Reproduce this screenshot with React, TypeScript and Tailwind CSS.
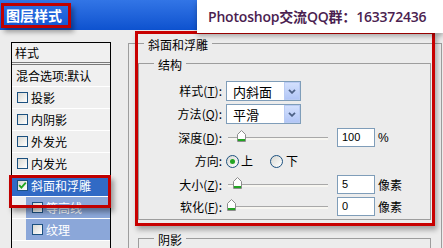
import React from 'react'

const CJK = "font-['Noto_Sans_CJK_SC',sans-serif]"

function Box({ checked }: { checked?: boolean }) {
  return (
    <span className="w-[11px] h-[11px] shrink-0 border border-[#1C5180] bg-linear-to-br from-[#D8D8D2] to-white flex items-center justify-center">
      {checked && (
        <svg width="9" height="9" viewBox="0 0 9 9">
          <path d="M1.2 4.2 L3.4 6.6 L7.8 1.6" stroke="#1FA51F" strokeWidth="1.8" fill="none" />
        </svg>
      )}
    </span>
  )
}

function ListRow({ label, selected, sub, checked }: { label: string; selected?: boolean; sub?: boolean; checked?: boolean }) {
  if (sub) {
    return (
      <div className="h-[22px] border-b border-white pl-[14px]">
        <div className="h-full bg-[#8BA7D9] flex items-center pl-[6px] gap-[3px] text-white">
          <Box />
          <span>{label}</span>
        </div>
      </div>
    )
  }
  return (
    <div className={'h-[22px] border-b border-white flex items-center pl-[5px] gap-[3px] ' + (selected ? 'bg-[#316AC5] text-white' : '')}>
      <Box checked={checked} />
      <span>{label}</span>
    </div>
  )
}

function Combo({ value }: { value: string }) {
  return (
    <div className="w-[75px] h-[20px] border border-[#7F9DB9] bg-white flex items-center">
      <span className="flex-1 pl-[6px] text-[13px] leading-none">{value}</span>
      <span className="w-[16px] h-[18px] border border-[#B9CBF3] bg-linear-to-b from-[#D3E0FD] to-[#B2C6F6] flex items-center justify-center">
        <svg width="8" height="5" viewBox="0 0 8 5">
          <path d="M1 0.8 L4 3.8 L7 0.8" stroke="#4D6185" strokeWidth="1.8" fill="none" />
        </svg>
      </span>
    </div>
  )
}

function Slider({ pos }: { pos: number }) {
  return (
    <div className="relative w-[104px] h-[19px]">
      <div className="absolute left-[2px] right-[2px] top-[9px] h-[3px] bg-[#F7F6F1] border-t border-[#A8A8A8]" />
      <svg className="absolute top-[2px]" style={{ left: pos }} width="9" height="12" viewBox="0 0 9 12">
        <path d="M0.5 11.5 V4.5 L4.5 0.5 L8.5 4.5 V11.5 Z" fill="#fff" stroke="#8C8C8C" />
        <rect x="1" y="9" width="7" height="2" fill="#22A422" />
      </svg>
    </div>
  )
}

function Num({ value }: { value: string }) {
  return (
    <div className="ml-[7px] w-[38px] h-[19px] border border-[#7F9DB9] bg-white flex items-center pl-[4px] font-['Liberation_Sans',sans-serif] text-[11px]">
      {value}
    </div>
  )
}

function Radio({ checked }: { checked?: boolean }) {
  return (
    <span className="w-[13px] h-[13px] rounded-full border border-[#1C5180] bg-linear-to-br from-[#D8D8D2] to-white flex items-center justify-center">
      {checked && <span className="w-[5px] h-[5px] rounded-full bg-[#22A422]" />}
    </span>
  )
}

function Field({ label, k, children, className = '' }: { label: string; k?: string; children: React.ReactNode; className?: string }) {
  return (
    <div className={'flex items-center ' + className}>
      <span className="w-[83px] shrink-0 text-right">
        {label}
        {k && (
          <>
            (<span className="underline">{k}</span>)
          </>
        )}
        :
      </span>
      <div className="ml-[4px] flex items-center">{children}</div>
    </div>
  )
}

const legend = 'ml-[15px] px-[4px] pt-[4px] leading-[14px]'

export default function App() {
  return (
    <div className={'relative w-[443px] h-[248px] overflow-hidden bg-[#ECECEC] text-[12px] text-black ' + CJK}>
      {/* title bar */}
      <div className="h-[30px] bg-linear-to-b from-[#3275E6] to-[#0D52CF] flex items-center pl-[6px]">
        <span className="text-white font-bold text-[14px] leading-none">图层样式</span>
      </div>

      <div className="flex">
        {/* effects list */}
        <div className="pl-[11px] pt-[12px]">
          <div className="w-[100px] h-[220px] border border-black bg-[#F0F0F0]">
            <div className="h-[22px] flex items-center pl-[3px] border-b-[3px] border-double border-[#7A7A7A]">样式</div>
            <div className="h-[22px] border-b border-white flex items-center pl-[4px]">混合选项:默认</div>
            <ListRow label="投影" />
            <ListRow label="内阴影" />
            <ListRow label="外发光" />
            <ListRow label="内发光" />
            <ListRow label="斜面和浮雕" selected checked />
            <ListRow label="等高线" sub />
            <ListRow label="纹理" sub />
          </div>
        </div>

        {/* options */}
        <fieldset className="ml-[17px] mt-[4px] w-[314px] h-[260px] border border-[#9D9D9D]">
          <legend className={legend + ' ml-[15px]'}>斜面和浮雕</legend>
          <fieldset className="ml-[9px] mt-[2px] w-[293px] border border-[#9D9D9D] pb-[3px]">
            <legend className={legend + ' ml-[14px]'}>结构</legend>
            <Field label="样式" k="T" className="mt-[9px] h-[20px]">
              <Combo value="内斜面" />
            </Field>
            <Field label="方法" k="Q" className="mt-[3px] h-[20px]">
              <Combo value="平滑" />
            </Field>
            <Field label="深度" k="D" className="mt-[4px] h-[19px]">
              <Slider pos={11} />
              <Num value="100" />
              <span className="ml-[3px] font-['Liberation_Sans',sans-serif] text-[12px]">%</span>
            </Field>
            <Field label="方向" className="mt-[4px] h-[20px]">
              <Radio checked />
              <span className="ml-[2px]">上</span>
              <span className="ml-[17px]">
                <Radio />
              </span>
              <span className="ml-[3px]">下</span>
            </Field>
            <Field label="大小" k="Z" className="mt-[4px] h-[19px]">
              <Slider pos={7} />
              <Num value="5" />
              <span className="ml-[3px]">像素</span>
            </Field>
            <Field label="软化" k="F" className="mt-[3px] h-[19px]">
              <Slider pos={1} />
              <Num value="0" />
              <span className="ml-[3px]">像素</span>
            </Field>
          </fieldset>
          <fieldset className="ml-[9px] mt-[9px] w-[293px] h-[60px] border border-[#9D9D9D]">
            <legend className={legend + ' ml-[14px]'}>阴影</legend>
          </fieldset>
        </fieldset>
      </div>

      {/* annotations */}
      <div className="absolute left-[1px] top-[3px] w-[70px] h-[25px] border-[3px] border-[#C00000] shadow-[3px_4px_5px_rgba(0,0,0,0.35)]" />
      <div className="absolute left-[9px] top-[175px] w-[102px] h-[33px] border-[3px] border-[#C00000] shadow-[3px_4px_5px_rgba(0,0,0,0.35)]" />
      <div className="absolute left-[135px] top-[31px] w-[300px] h-[195px] border-[3px] border-[#C80000] shadow-[2px_4px_5px_rgba(0,0,0,0.3)]" />

      <div className="absolute right-0 top-0 w-[246px] h-[33px] bg-white shadow-[0_3px_5px_rgba(0,0,0,0.3)] flex items-center pl-[11px]">
        <span className="whitespace-nowrap font-['Open_Sans','Noto_Sans_CJK_SC',sans-serif] font-semibold text-[14px] tracking-[-0.2px] leading-none text-[#4B1E50]">
          Photoshop交流QQ群：163372436
        </span>
      </div>
    </div>
  )
}
